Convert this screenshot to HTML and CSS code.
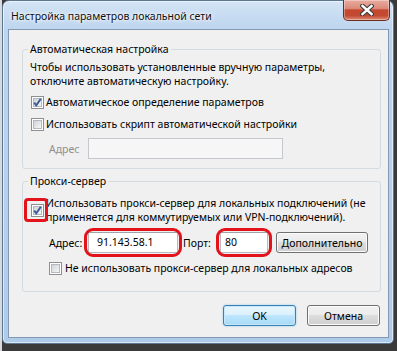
FILE: index.html
```html
<!DOCTYPE html>
<html lang="ru">
  <head>
    <meta charset="UTF-8" />
    <meta name="viewport" content="width=device-width, initial-scale=1.0" />
    <title>Настройка параметров локальной сети</title>
    <link rel="stylesheet" href="styles.css">
  </head>
  <body>
    <div class="window">
      <div class="titlebar">
        <span class="title">Настройка параметров локальной сети</span>
        <button class="close" type="button" aria-label="Закрыть">
          <svg width="14" height="12" viewBox="0 0 14 12">
            <path d="M2.5 2 L11.5 10 M11.5 2 L2.5 10" stroke="#3b3b3b" stroke-width="4.6" stroke-linecap="square" />
            <path d="M2.5 2 L11.5 10 M11.5 2 L2.5 10" stroke="#fff" stroke-width="2.4" stroke-linecap="square" />
          </svg>
        </button>
      </div>

      <div class="client">
        <fieldset class="group group-auto">
          <legend>Автоматическая настройка</legend>
          <p class="note">Чтобы использовать установленные вручную параметры,<br>отключите автоматическую настройку.</p>
          <label class="check">
            <span class="box">
              <svg width="11" height="11" viewBox="0 0 11 11"><path d="M2.2 5.6 L4.3 8.4 L8.8 1.8" fill="none" stroke="#3f5d96" stroke-width="2" /></svg>
            </span>
            <span>Автоматическое определение параметров</span>
          </label>
          <label class="check">
            <span class="box"></span>
            <span>Использовать скрипт автоматической настройки</span>
          </label>
          <div class="row row-script">
            <span class="lbl lbl-disabled">Адрес</span>
            <span class="field field-disabled"></span>
          </div>
        </fieldset>

        <fieldset class="group group-proxy">
          <legend>Прокси-сервер</legend>
          <label class="check">
            <span class="box marked mark-box">
              <svg width="11" height="11" viewBox="0 0 11 11"><path d="M2.2 5.6 L4.3 8.4 L8.8 1.8" fill="none" stroke="#3f5d96" stroke-width="2" /></svg>
            </span>
            <span class="check-text">Использовать прокси-сервер для локальных подключений (не<br>применяется для коммутируемых или VPN-подключений).</span>
          </label>
          <div class="row row-proxy">
            <span class="lbl">Адрес:</span>
            <span class="field field-addr marked mark-field">91.143.58.1</span>
            <span class="lbl lbl-port">Порт:</span>
            <span class="field field-port marked mark-field">80</span>
            <button class="btn btn-more" type="button">Дополнительно</button>
          </div>
          <label class="check check-sub">
            <span class="box"></span>
            <span>Не использовать прокси-сервер для локальных адресов</span>
          </label>
        </fieldset>

        <div class="actions">
          <button class="btn btn-default" type="button">OK</button>
          <button class="btn" type="button">Отмена</button>
        </div>
      </div>
    </div>
  </body>
</html>
```

FILE: styles.css
```css
html {
  font-size: 10.5px;
}
body {
  margin: 0;
  width: 397px;
  height: 351px;
  overflow: hidden;
  color: #000;
  background: linear-gradient(to right, #d6dadf 0 2px, #3a3a3a 2px);
  font-family: 'Noto Sans', 'Open Sans', sans-serif;
  font-size: 10.5px;
}
.window {
  box-sizing: border-box;
  display: flex;
  flex-direction: column;
  width: 392px;
  height: 344px;
  margin-left: 2px;
  padding: 0 4px 5px 5px;
  border: 1px solid #5e7791;
  border-radius: 7px 7px 5px 5px;
  background: linear-gradient(180deg, #d3e4f5 0, #bdd5ee 28px, #b6d0ec 60%, #aecbea 100%);
  box-shadow: inset 0 0 0 1px rgba(255, 255, 255, 0.55);
}
.titlebar {
  display: flex;
  justify-content: space-between;
  align-items: flex-start;
  height: 28px;
}
.title {
  padding: 8px 0 0 3px;
  line-height: 15px;
  color: #101010;
  text-shadow: 0 0 5px #fff, 0 0 3px #fff;
}
.close {
  display: grid;
  place-items: center;
  width: 47px;
  height: 21px;
  margin: -1px -1px 0 0;
  padding: 0;
  border: 1px solid #6e2c22;
  border-top: none;
  border-radius: 0 0 5px 5px;
  background: linear-gradient(180deg, #e8ab9f 0, #dc8c7b 42%, #c6472f 50%, #c24a33 78%, #dd8e74 100%);
  box-shadow: inset 0 0 0 1px rgba(255, 255, 255, 0.35);
}

.client {
  flex: 1;
  display: flex;
  flex-direction: column;
  padding: 12px 7px 0 13px;
  border: 1px solid #8398b1;
  background: #f0f0f0;
}
.group {
  min-width: 0;
  margin: 0;
  padding: 0 7px 9px;
  border: 1px solid #d3dbe1;
  border-radius: 3px;
}
.group legend {
  margin-left: -2px;
  padding: 0 2px;
  line-height: 15px;
}
.group-proxy {
  margin-top: 5px;
  padding-bottom: 15px;
}
.note {
  margin: 3px 0 0;
  line-height: 14px;
}

.check {
  display: flex;
  align-items: center;
  gap: 2px;
  margin-top: 6px;
  line-height: 16px;
}
.group-proxy .check {
  margin-top: 7px;
  line-height: 14px;
}
.group-proxy .check-sub {
  line-height: 16px;
}
.check-sub {
  gap: 3px;
  padding-left: 19px;
}
.check-sub .box {
  margin-left: 0;
}
.box {
  display: grid;
  box-sizing: border-box;
  flex: none;
  width: 13px;
  height: 13px;
  margin-left: 1px;
  padding: 1px;
  border: 1px solid #8e8f8f;
  background: #fff;
}
.box::before {
  content: "";
  grid-area: 1 / 1;
  box-sizing: border-box;
  border: 1px solid #b4b9c1;
  background: linear-gradient(135deg, #cfd3d9, #f6f6f6);
}
.box svg {
  grid-area: 1 / 1;
  margin: -1px;
}

.row {
  display: flex;
  align-items: center;
  margin-top: 6px;
  padding-left: 19px;
}
.row-proxy {
  margin-top: 8px;
}
.lbl {
  width: 39px;
}
.lbl-disabled {
  color: #8f8f8f;
}
.lbl-port {
  width: 37px;
  margin-left: 5px;
}
.field {
  box-sizing: border-box;
  height: 21px;
  padding: 0 4px;
  border: 1px solid #b7bbc1;
  border-top-color: #9ea3aa;
  background: #fff;
  line-height: 19px;
}
.field-disabled {
  width: 195px;
  border-color: #c4c8cd;
  background: #f6f6f6;
}
.field-addr {
  width: 90px;
  padding-left: 8px;
}
.field-port {
  width: 48px;
}

.marked {
  position: relative;
}
.marked::after {
  content: "";
  position: absolute;
  border: 3px solid #e3131c;
  pointer-events: none;
}
.mark-field::after {
  inset: -5px -5px -5px -5px;
  border-radius: 9px;
}
.mark-box::after {
  inset: -7px -5px -6px -8px;
  border-radius: 4px;
}

.btn {
  box-sizing: border-box;
  height: 21px;
  padding: 0;
  border: 1px solid #707070;
  border-radius: 3px;
  background: linear-gradient(180deg, #f2f2f2 0, #ebebeb 50%, #dddddd 50%, #cfcfcf 100%);
  box-shadow: inset 0 0 0 1px #fbfbfb;
  color: #000;
  font-family: inherit;
  font-size: 10.5px;
}
.btn-more {
  width: 92px;
  margin-left: 8px;
}
.btn-default {
  border-color: #3c7fb1;
  background: linear-gradient(180deg, #eaf6fd 0, #d9f0fc 50%, #bee6fd 50%, #a7d9f5 100%);
  box-shadow: inset 0 0 0 1px #c5e8fb, 0 0 2px #7fc4ee;
}
.actions {
  display: flex;
  justify-content: flex-end;
  gap: 11px;
  margin-top: 13px;
  padding-right: 1px;
}
.actions .btn {
  width: 73px;
}
```
